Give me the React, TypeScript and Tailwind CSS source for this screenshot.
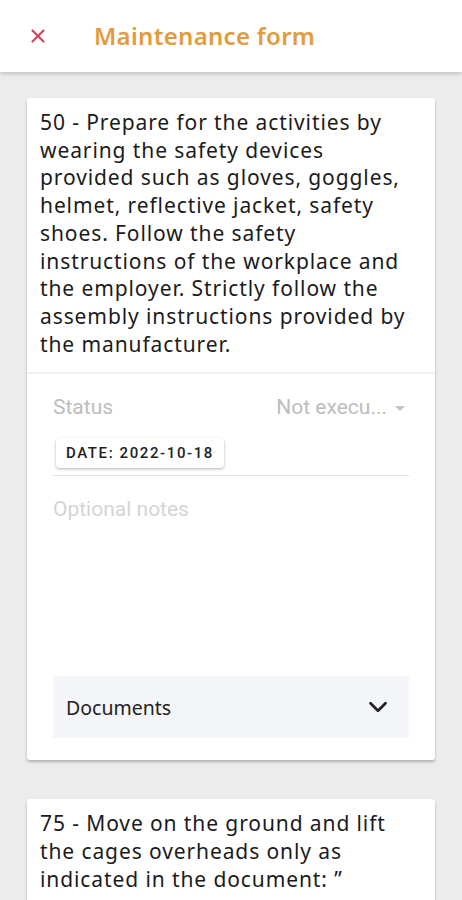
import { ChevronDown, X } from "lucide-react";

const step50 =
	"50 - Prepare for the activities by wearing the safety devices provided such as gloves, goggles, helmet, reflective jacket, safety shoes. Follow the safety instructions of the workplace and the employer. Strictly follow the assembly instructions provided by the manufacturer.";

const step75 =
	"75 - Move on the ground and lift the cages overheads only as indicated in the document: \u201D";

export default function App() {
	return (
		<div className="w-[462px] h-[900px] overflow-hidden bg-[#ececec] font-['Noto_Sans',sans-serif]">
			{/* Header */}
			<div className="h-[72px] bg-white flex items-center shadow-[0_2px_4px_rgba(0,0,0,0.18)] relative z-10">
				<X className="ml-[27px] w-[22px] h-[22px] text-[#d8435f]" strokeWidth={2.4} />
				<div className="ml-[45px] text-[24px] font-semibold text-[#e29b3d] tracking-[0.3px]">
					Maintenance form
				</div>
			</div>

			<div className="px-[27px] pt-[26px] flex flex-col gap-[39px]">
				{/* Card 50 */}
				<div className="bg-white rounded-[3px] shadow-[0_2px_3px_rgba(0,0,0,0.25)]">
					<div className="pl-[13px] pr-[24px] pt-[11px] pb-[14px] text-[21px] tracking-[0.9px] leading-[27.7px] text-[#1b1b1b]">
						{step50}
					</div>
					<div className="border-t-2 border-[#f0f0f0] px-[26px] pt-[18px] pb-[22px] font-['Roboto',sans-serif]">
						<div className="flex items-center justify-between text-[21px] text-[#bdbdbd]">
							<span>Status</span>
							<span className="flex items-center gap-[8px] mr-[4px]">
								Not execu...
								<span className="w-0 h-0 border-l-[5px] border-r-[5px] border-t-[5px] border-l-transparent border-r-transparent border-t-[#c4c4c4]" />
							</span>
						</div>
						<div className="pt-[14px] pb-[7px] border-b border-[#e4e4e4]">
							<span className="inline-block ml-[3px] px-[10px] py-[4px] rounded-[4px] bg-white shadow-[0_1px_3px_rgba(0,0,0,0.3)] text-[15px] font-medium tracking-[1.6px] text-[#222]">
								DATE: 2022-10-18
							</span>
						</div>
						<div className="pt-[18px] h-[200px] text-[21px] text-[#d4d4d4]">Optional notes</div>
						<div className="h-[62px] bg-[#f4f5f8] flex items-center justify-between pl-[13px] pr-[16px] font-['Noto_Sans',sans-serif]">
							<span className="text-[19.5px] text-[#222]">Documents</span>
							<ChevronDown className="w-[30px] h-[30px] text-[#222]" strokeWidth={2.2} />
						</div>
					</div>
				</div>

				{/* Card 75 */}
				<div className="bg-white rounded-[3px] shadow-[0_2px_3px_rgba(0,0,0,0.25)]">
					<div className="pl-[13px] pr-[24px] pt-[11px] pb-[40px] text-[21px] tracking-[0.9px] leading-[27.7px] text-[#1b1b1b]">
						{step75}
					</div>
				</div>
			</div>
		</div>
	);
}
